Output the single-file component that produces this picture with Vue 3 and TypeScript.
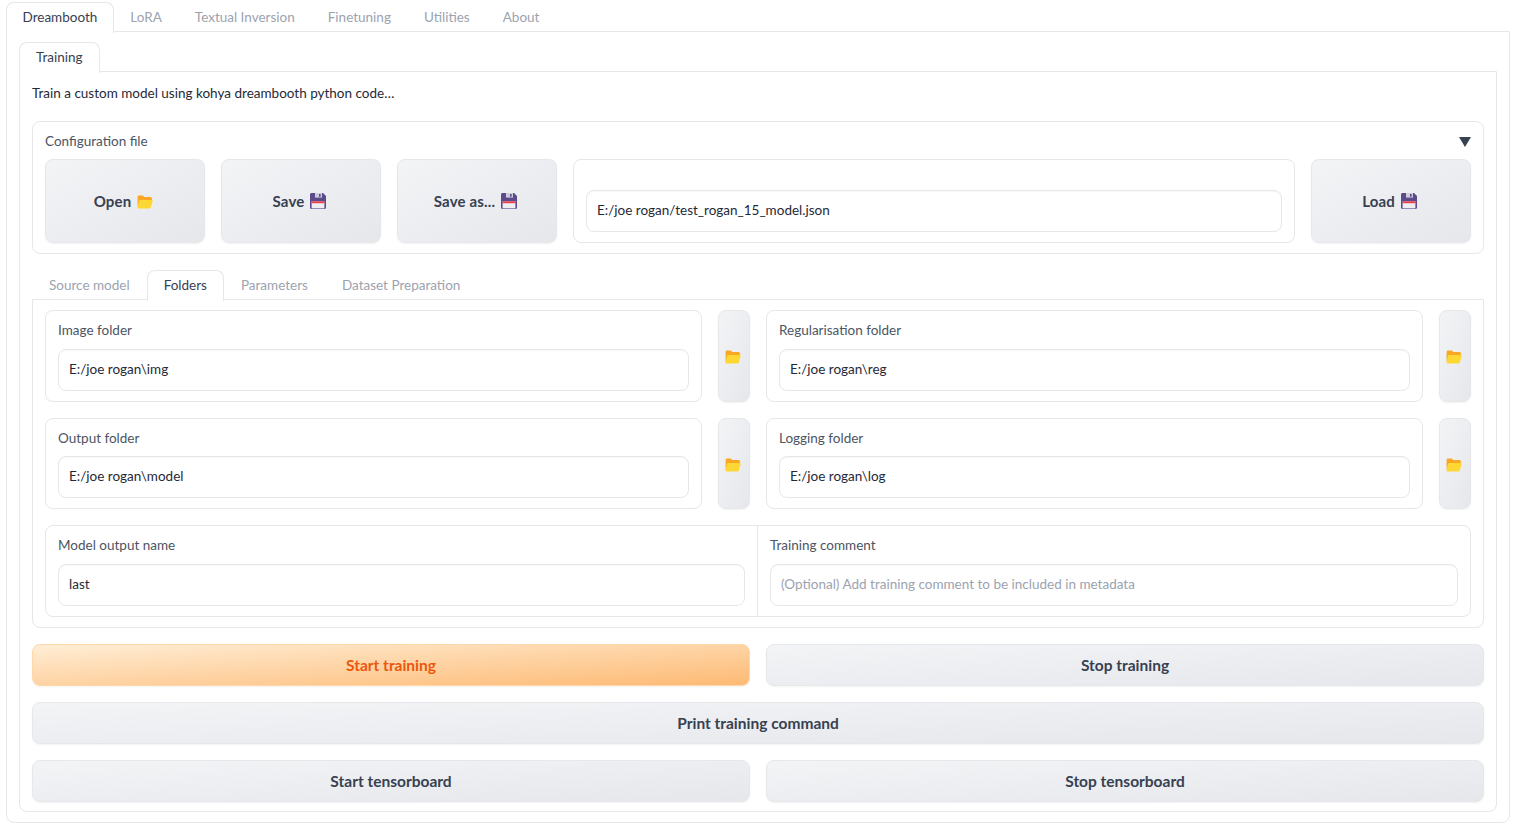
<script setup lang="ts">
const topTabs: string[] = ['Dreambooth', 'LoRA', 'Textual Inversion', 'Finetuning', 'Utilities', 'About']
const subTabs: string[] = ['Source model', 'Folders', 'Parameters', 'Dataset Preparation']
const folders: { label: string; value: string }[][] = [
  [
    { label: 'Image folder', value: 'E:/joe rogan\\img' },
    { label: 'Regularisation folder', value: 'E:/joe rogan\\reg' },
  ],
  [
    { label: 'Output folder', value: 'E:/joe rogan\\model' },
    { label: 'Logging folder', value: 'E:/joe rogan\\log' },
  ],
]
</script>

<template>
  <div class="page">
    <svg width="0" height="0" class="defs">
      <symbol id="folder" viewBox="0 0 16 14">
        <path d="M0.6 2C0.6 1 1.2.4 2.1.4h3.2c.7 0 1 .3 1.4.9l.5.8h6.2c.9 0 1.5.6 1.5 1.5V5H3.6L.6 12z" fill="#f9a825" />
        <path d="M3.2 5h11.7c.7 0 1 .5.8 1.1l-1.900 6.300c-.2.7-.7 1.100-1.400 1.100H1.600c-.8 0-1.200-.6-.9-1.300L2 5.800c.2-.5.6-.8 1.200-.8z" fill="#fdd835" />
      </symbol>
      <symbol id="floppy" viewBox="0 0 16 16">
        <path d="M1.500 0H13l3 3v11.500c0 .9-.6 1.500-1.500 1.500h-13C.6 16 0 15.400 0 14.500v-13C0 .6.600 0 1.500 0z" fill="#5c4a8a" />
        <rect x="5" y="0" width="7" height="4.600" fill="#cfcbdc" />
        <rect x="9" y="1" width="1.600" height="2.800" fill="#5c4a8a" />
        <rect x="1.600" y="8.400" width="12.800" height="7" fill="#eeeef2" />
        <rect x="1.600" y="8.400" width="12.800" height="1.800" fill="#f03a4a" />
      </symbol>
    </svg>

    <nav class="tabs top">
      <button v-for="(t, i) in topTabs" :key="t" class="tab" :class="{ active: i === 0 }">{{ t }}</button>
    </nav>
    <section class="outer">
      <nav class="tabs">
        <button class="tab active">Training</button>
      </nav>
      <section class="inner">
        <p class="intro">Train a custom model using kohya dreambooth python code…</p>

        <div class="config">
          <div class="config-head">
            <span class="label">Configuration file</span>
            <span class="caret"></span>
          </div>
          <div class="config-row">
            <button class="btn tall">Open <svg class="ico folder-ico"><use href="#folder" /></svg></button>
            <button class="btn tall">Save <svg class="ico"><use href="#floppy" /></svg></button>
            <button class="btn tall">Save as... <svg class="ico"><use href="#floppy" /></svg></button>
            <div class="path-box">
              <div class="input">E:/joe rogan/test_rogan_15_model.json</div>
            </div>
            <button class="btn tall">Load <svg class="ico"><use href="#floppy" /></svg></button>
          </div>
        </div>

        <nav class="tabs sub">
          <button v-for="(t, i) in subTabs" :key="t" class="tab" :class="{ active: i === 1 }">{{ t }}</button>
        </nav>
        <section class="panel">
          <div v-for="(row, r) in folders" :key="r" class="folder-row">
            <template v-for="f in row" :key="f.label">
              <div class="field">
                <div class="label">{{ f.label }}</div>
                <div class="input">{{ f.value }}</div>
              </div>
              <button class="btn pick"><svg class="ico folder-ico"><use href="#folder" /></svg></button>
            </template>
          </div>
          <div class="split">
            <div class="split-cell">
              <div class="label">Model output name</div>
              <div class="input">last</div>
            </div>
            <div class="split-cell right">
              <div class="label">Training comment</div>
              <div class="input placeholder">(Optional) Add training comment to be included in metadata</div>
            </div>
          </div>
        </section>

        <div class="actions">
          <button class="btn wide primary">Start training</button>
          <button class="btn wide">Stop training</button>
          <button class="btn wide full">Print training command</button>
          <button class="btn wide">Start tensorboard</button>
          <button class="btn wide">Stop tensorboard</button>
        </div>
      </section>
    </section>
  </div>
</template>

<style>
html, body { margin: 0; background: #fff; }
</style>

<style scoped>
.page {
  box-sizing: border-box;
  width: 1516px;
  height: 826px;
  padding: 2px 6px 0;
  font-family: "Lato", "Liberation Sans", sans-serif;
  font-size: 13.5px;
  color: #374151;
  overflow: hidden;
}
.defs { position: absolute; }
* { box-sizing: border-box; }
.tabs {
  display: flex;
  height: 30px;
  position: relative;
  z-index: 1;
}
.tab {
  height: 30px;
  padding: 0 16px 2px;
  border: 1px solid transparent;
  border-bottom: 0;
  border-radius: 8px 8px 0 0;
  background: none;
  font: inherit;
  color: #9ca3af;
}
.top .tab { padding-left: 15.5px; padding-right: 15.5px; }
.tab.active {
  border-color: #e5e7eb;
  background: #fff;
  color: #374151;
  height: 31px;
  padding-bottom: 3px;
}
.outer {
  height: 792px;
  margin-top: -1px;
  padding: 10px 12px;
  border: 1px solid #e5e7eb;
  border-radius: 0 0 8px 8px;
}
.inner {
  height: 741px;
  margin-top: -1px;
  padding: 0 12px;
  border: 1px solid #e5e7eb;
  border-radius: 0 0 8px 8px;
}
.intro {
  margin: 0;
  height: 49px;
  padding-top: 11px;
  line-height: 20px;
  color: #1f2937;
}
.config {
  height: 133px;
  padding: 11px 12px 0;
  border: 1px solid #e5e7eb;
  border-radius: 8px;
}
.config-head {
  display: flex;
  justify-content: space-between;
  align-items: center;
  height: 17px;
  margin-bottom: 9px;
}
.label { color: #4b5563; line-height: 17px; height: 17px; }
.caret {
  width: 0;
  height: 0;
  border-left: 6px solid transparent;
  border-right: 6px solid transparent;
  border-top: 10px solid #374151;
}
.config-row { display: flex; gap: 16px; }
.btn {
  display: flex;
  align-items: center;
  justify-content: center;
  gap: 6px;
  border: 1px solid #e5e7eb;
  border-radius: 8px;
  background: linear-gradient(to bottom right, #f3f4f6, #e5e7eb);
  box-shadow: 0 1px 2px rgba(0, 0, 0, .05);
  font: inherit;
  font-size: 15px;
  font-weight: 700;
  color: #374151;
}
.tall { width: 160px; height: 84px; flex: none; padding: 0 3px 0 0; letter-spacing: .15px; }
.ico { width: 16px; height: 16px; flex: none; }
.folder-ico { height: 14px; margin-top: 1px; }
.path-box {
  flex: 1;
  padding: 30px 12px 0;
  border: 1px solid #e5e7eb;
  border-radius: 8px;
}
.input {
  height: 42px;
  padding: 0 10px;
  border: 1px solid #e5e7eb;
  border-radius: 8px;
  line-height: 38px;
  color: #1f2937;
  white-space: nowrap;
  box-shadow: inset 0 1px 1px rgba(0, 0, 0, .03);
}
.placeholder { color: #9ca3af; }
.sub { margin-top: 16px; }
.panel {
  height: 329px;
  margin-top: -1px;
  padding: 10px 12px 0;
  border: 1px solid #e5e7eb;
  border-radius: 0 0 8px 8px;
}
.folder-row {
  display: flex;
  gap: 16px;
  height: 91.5px;
  margin-bottom: 16px;
}
.field {
  flex: 1;
  padding: 11px 12px 0;
  border: 1px solid #e5e7eb;
  border-radius: 8px;
}
.field .label { margin-bottom: 10px; }
.folder-row + .folder-row .label { margin-bottom: 9.5px; }
.pick { width: 32px; flex: none; padding: 2px 2px 0 0; }
.split {
  display: grid;
  grid-template-columns: 711px 1fr;
  height: 92px;
  border: 1px solid #e5e7eb;
  border-radius: 8px;
}
.split-cell { padding: 11px 12px 0; }
.split-cell .label { margin-bottom: 10px; }
.right { border-left: 1px solid #e5e7eb; }
.actions {
  display: grid;
  grid-template-columns: 1fr 1fr;
  gap: 16px;
  margin-top: 16px;
}
.wide { height: 42px; font-size: 15.5px; padding-bottom: 2px; }
.full { grid-column: 1 / -1; }
.primary {
  border-color: #fed7aa;
  background: linear-gradient(to bottom right, #ffedd5, #fdba74);
  color: #ea580c;
}
</style>
